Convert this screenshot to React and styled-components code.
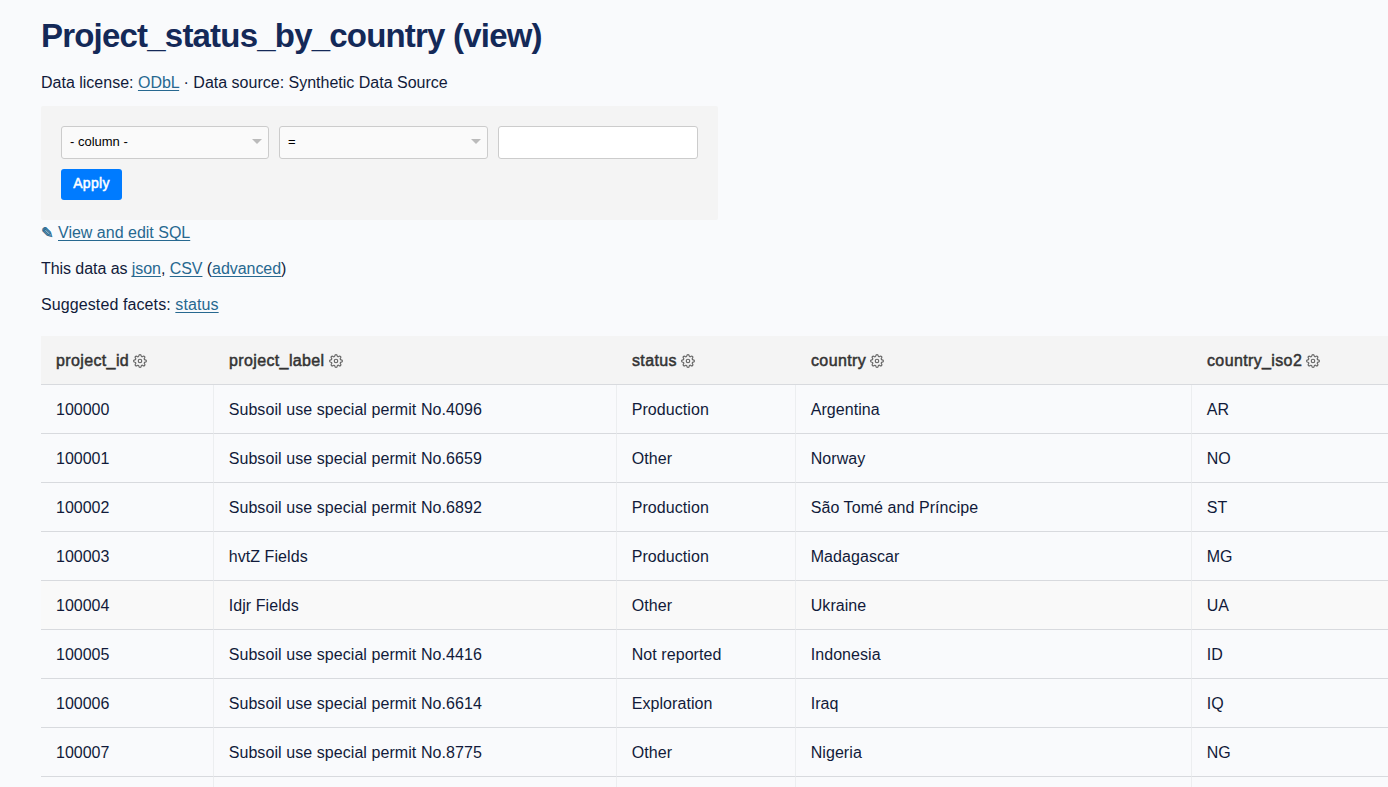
import React from "react";
import styled, { createGlobalStyle } from "styled-components";

const GlobalStyle = createGlobalStyle`
  * { box-sizing: border-box; }
  html, body { margin: 0; overflow: hidden; }
  body {
    background: #f9fafc;
    color: #111a3a;
    font: 16px/24px "Liberation Sans", Arial, sans-serif;
  }
`;

const Page = styled.main`
  height: 787px;
  overflow: hidden;
  padding: 16px 0 0 41px;
`;

const Title = styled.h1`
  margin: 0 0 15px;
  color: #142958;
  font-size: 33px;
  line-height: 40px;
  font-weight: 700;
  letter-spacing: -0.8px;
`;

const Line = styled.p`
  margin: 0 0 12px;
  height: 24px;
  white-space: nowrap;
  letter-spacing: ${(p) => p.$spacing || "0"};
`;

const Link = styled.a`
  color: #276890;
  text-decoration: underline 1px;
  text-underline-offset: 2px;
  text-decoration-skip-ink: none;
`;

const Pencil = styled.span`
  display: inline-block;
  width: 17px;
  color: #276890;
  font-family: "DejaVu Sans", sans-serif;
  font-size: 15px;
  line-height: 20px;
  letter-spacing: 0;
  -webkit-text-stroke: 0.4px #276890;
`;

const Filters = styled.form`
  width: 677px;
  height: 114px;
  margin-top: -1px;
  padding: 20px;
  background: #f4f4f4;
  border-radius: 2px;
`;

const Controls = styled.div`
  display: flex;
  gap: 10px;
  margin-bottom: 10px;
`;

const Select = styled.div`
  display: flex;
  align-items: center;
  justify-content: space-between;
  width: ${(p) => p.$width}px;
  height: 33px;
  padding: 0 6px 2px 8px;
  border: 1px solid #ccc;
  border-radius: 3px;
  background: #fafafa;
  color: #000;
  font-size: 13px;
`;

const Caret = styled.span`
  border: 5px solid transparent;
  border-top-color: #bbb;
  border-bottom: 0;
`;

const Input = styled.input`
  width: 200px;
  height: 33px;
  border: 1px solid #ccc;
  border-radius: 3px;
  background: #fff;
`;

const Apply = styled.button`
  display: block;
  width: 61px;
  height: 31px;
  padding: 0 0 3px;
  border: 0;
  border-radius: 3px;
  background: #007bff;
  color: #fff;
  font: 14px "Liberation Sans", Arial, sans-serif;
  -webkit-text-stroke: 0.5px #fff;
  letter-spacing: 0.3px;
`;

const Links = styled.div`
  padding-top: 1px;
`;

const Table = styled.table`
  width: 1420px;
  margin-top: 19px;
  table-layout: fixed;
  border-collapse: separate;
  border-spacing: 0;
  white-space: nowrap;
`;

const Heading = styled.th`
  height: 49px;
  padding: 2px 15px 0 ${(p) => (p.$first ? "15px" : "16px")};
  border-bottom: 1px solid #d8dade;
  background: #f4f4f4;
  color: #333;
  font-weight: 400;
  text-align: left;
  letter-spacing: 0.37px;
  -webkit-text-stroke: 0.5px #333;
`;

const Cell = styled.td`
  height: 49px;
  padding: 2px 15px 0 ${(p) => (p.$first ? "15px" : "14.7px")};
  border-bottom: 1px solid #d8dade;
  border-left: ${(p) => (p.$first ? "0" : "1px solid #eceef0")};
  letter-spacing: ${(p) => (p.$first ? "0" : "0.07px")};
`;

const Row = styled.tr`
  background: ${(p) => (p.$shaded ? "#f9f9f9" : "transparent")};
`;

const GearSvg = styled.svg`
  width: 14px;
  height: 14px;
  margin-left: 4px;
  vertical-align: -2px;
`;

function Gear() {
  return (
    <GearSvg viewBox="0 0 24 24" fill="none" stroke="#666" strokeWidth="2" strokeLinecap="round" strokeLinejoin="round">
      <circle cx="12" cy="12" r="3" />
      <path d="M19.4 15a1.65 1.65 0 0 0 .33 1.82l.06.06a2 2 0 0 1 0 2.83 2 2 0 0 1-2.83 0l-.06-.06a1.65 1.65 0 0 0-1.82-.33 1.65 1.65 0 0 0-1 1.51V21a2 2 0 0 1-2 2 2 2 0 0 1-2-2v-.09A1.65 1.65 0 0 0 9 19.4a1.65 1.65 0 0 0-1.82.33l-.06.06a2 2 0 0 1-2.83 0 2 2 0 0 1 0-2.83l.06-.06a1.65 1.65 0 0 0 .33-1.82 1.65 1.65 0 0 0-1.51-1H3a2 2 0 0 1-2-2 2 2 0 0 1 2-2h.09A1.65 1.65 0 0 0 4.6 9a1.65 1.65 0 0 0-.33-1.82l-.06-.06a2 2 0 0 1 0-2.83 2 2 0 0 1 2.83 0l.06.06a1.65 1.65 0 0 0 1.82.33H9a1.65 1.65 0 0 0 1-1.51V3a2 2 0 0 1 2-2 2 2 0 0 1 2 2v.09a1.65 1.65 0 0 0 1 1.51 1.65 1.65 0 0 0 1.82-.33l.06-.06a2 2 0 0 1 2.83 0 2 2 0 0 1 0 2.83l-.06.06a1.65 1.65 0 0 0-.33 1.82V9a1.65 1.65 0 0 0 1.51 1H21a2 2 0 0 1 2 2 2 2 0 0 1-2 2h-.09a1.65 1.65 0 0 0-1.51 1z" />
    </GearSvg>
  );
}

const columns = [
  { name: "project_id", width: 172 },
  { name: "project_label", width: 403 },
  { name: "status", width: 179 },
  { name: "country", width: 396 },
  { name: "country_iso2", width: 270 },
];

const rows = [
  ["100000", "Subsoil use special permit No.4096", "Production", "Argentina", "AR"],
  ["100001", "Subsoil use special permit No.6659", "Other", "Norway", "NO"],
  ["100002", "Subsoil use special permit No.6892", "Production", "São Tomé and Príncipe", "ST"],
  ["100003", "hvtZ Fields", "Production", "Madagascar", "MG"],
  ["100004", "Idjr Fields", "Other", "Ukraine", "UA"],
  ["100005", "Subsoil use special permit No.4416", "Not reported", "Indonesia", "ID"],
  ["100006", "Subsoil use special permit No.6614", "Exploration", "Iraq", "IQ"],
  ["100007", "Subsoil use special permit No.8775", "Other", "Nigeria", "NG"],
  ["", "", "", "", ""],
];

export default function App() {
  return (
    <>
      <GlobalStyle />
      <Page>
        <Title>Project_status_by_country (view)</Title>
        <Line>
          Data license: <Link>ODbL</Link> · Data source: Synthetic Data Source
        </Line>
        <Filters>
          <Controls>
            <Select $width={208}>- column -<Caret /></Select>
            <Select $width={209}>=<Caret /></Select>
            <Input type="text" />
          </Controls>
          <Apply type="button">Apply</Apply>
        </Filters>
        <Links>
          <Line>
            <Pencil>✎</Pencil>
            <Link>View and edit SQL</Link>
          </Line>
          <Line $spacing="-0.06px">
            This data as <Link>json</Link>, <Link>CSV</Link> (<Link>advanced</Link>)
          </Line>
          <Line $spacing="0.1px">
            Suggested facets: <Link>status</Link>
          </Line>
        </Links>
        <Table>
          <colgroup>
            {columns.map((c) => <col key={c.name} width={c.width} />)}
          </colgroup>
          <thead>
            <tr>
              {columns.map((c, i) => <Heading key={c.name} $first={i === 0}>{c.name}<Gear /></Heading>)}
            </tr>
          </thead>
          <tbody>
            {rows.map((row, r) => (
              <Row key={r} $shaded={r === 4}>
                {row.map((value, i) => <Cell key={i} $first={i === 0}>{value}</Cell>)}
              </Row>
            ))}
          </tbody>
        </Table>
      </Page>
    </>
  );
}
